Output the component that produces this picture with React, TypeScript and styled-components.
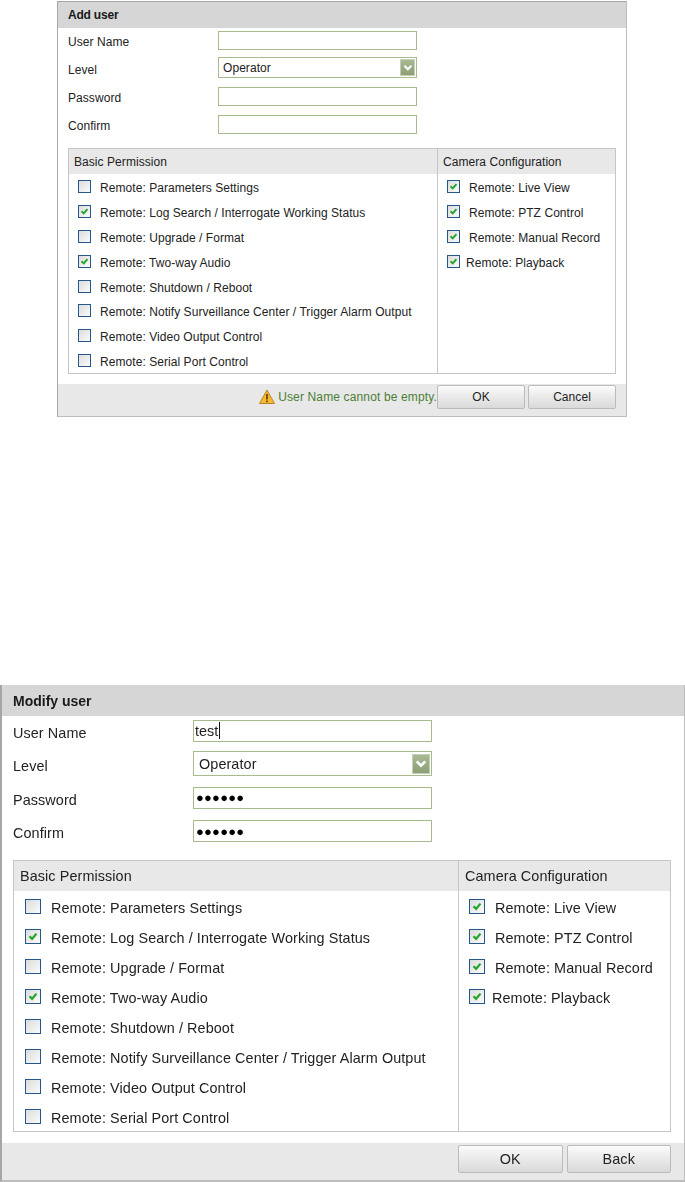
import React from "react";
import styled, { createGlobalStyle, ThemeProvider } from "styled-components";

const GlobalStyle = createGlobalStyle`
  html, body { margin: 0; padding: 0; background: #fff; }
  body { font-family: "Liberation Sans", Arial, sans-serif; }
`;

type M = {
  width: number; marginTop: number; marginLeft: number; borderL: number; borderT: number; borderR: number; borderB: number;
  headerH: number; titleSize: number; titleSpacing: number; pad: number; fieldH: number; labelW: number; inputW: number; inputH: number; selectH: number;
  inputGap: number; selectGap: number; font: number; spacing: number; tableTop: number; tableW: number; headH: number; rowH: number;
  leftW: number; cb: number; cbH: number; cbLeft: number; cbGap: number; cellPad: number; footerTop: number; footerH: number;
  btnW: number; btnH: number; btnGap: number; arrowW: number; arrowH: number; blur: number; rightCbLeft: number; rightGap: number; tightGap: number;
  valuePad: number; footerPad: number; footerAlign: number; caretH: number;
};

const small: M = {
  width: 570, marginTop: 1, marginLeft: 57, borderL: 1, borderT: 1, borderR: 1, borderB: 1,
  headerH: 26, titleSize: 12, titleSpacing: -0.2, pad: 10, fieldH: 28, labelW: 150, inputW: 199, inputH: 19, selectH: 21,
  inputGap: 3, selectGap: 5, font: 12, spacing: 0.06, tableTop: 8, tableW: 548, headH: 25, rowH: 24.9,
  leftW: 368, cb: 13, cbH: 13, cbLeft: 9, cbGap: 9, cellPad: 5, footerTop: 10, footerH: 32,
  btnW: 88, btnH: 24, btnGap: 3, arrowW: 15, arrowH: 17, blur: 0, rightCbLeft: 9, rightGap: 9, tightGap: 6,
  valuePad: 5, footerPad: 10, footerAlign: 1, caretH: 14,
};

const large: M = {
  width: 685, marginTop: 268, marginLeft: 0, borderL: 2, borderT: 0, borderR: 1, borderB: 2,
  headerH: 31, titleSize: 14, titleSpacing: 0, pad: 11, fieldH: 33.5, labelW: 180, inputW: 239, inputH: 22, selectH: 25,
  inputGap: 4, selectGap: 5.5, font: 14.4, spacing: 0.09, tableTop: 10, tableW: 658, headH: 30, rowH: 30,
  leftW: 444, cb: 16, cbH: 15, cbLeft: 11, cbGap: 10, cellPad: 6, footerTop: 11, footerH: 37,
  btnW: 104.5, btnH: 28, btnGap: 4, arrowW: 18, arrowH: 20, blur: 0.4, rightCbLeft: 10, rightGap: 11, tightGap: 7,
  valuePad: 6, footerPad: 13, footerAlign: 2, caretH: 17,
};

const Panel = styled.section`
  box-sizing: border-box;
  width: ${p => p.theme.width}px;
  margin: ${p => p.theme.marginTop}px 0 0 ${p => p.theme.marginLeft}px;
  border-style: solid;
  border-color: #a6a6a6 #bdbdbd #bdbdbd #a6a6a6;
  border-width: ${p => p.theme.borderT}px ${p => p.theme.borderR}px ${p => p.theme.borderB}px ${p => p.theme.borderL}px;
  color: #222;
  font-size: ${p => p.theme.font}px;
  letter-spacing: ${p => p.theme.spacing}px;
  filter: ${p => (p.theme.blur ? `blur(${p.theme.blur}px)` : "none")};
`;

const Header = styled.h2`
  display: flex;
  align-items: center;
  height: ${p => p.theme.headerH}px;
  margin: 0;
  padding-left: ${p => p.theme.pad}px;
  background: #d6d6d6;
  color: #1a1a1a;
  font-size: ${p => p.theme.titleSize}px;
  font-weight: bold;
  letter-spacing: ${p => p.theme.titleSpacing}px;
`;

const Body = styled.div`
  padding: 0 ${p => p.theme.pad - 1}px 0 ${p => p.theme.pad}px;
`;

const Field = styled.div`
  display: grid;
  grid-template-columns: ${p => p.theme.labelW}px ${p => p.theme.inputW}px;
  align-items: center;
  height: ${p => p.theme.fieldH}px;
`;

const Label = styled.label``;

const InputBox = styled.div`
  box-sizing: border-box;
  display: flex;
  align-items: center;
  height: ${p => p.theme.inputH}px;
  margin-bottom: ${p => p.theme.inputGap}px;
  padding-left: 1px;
  border: 1px solid #a8bb8d;
  background: #fff;
  letter-spacing: 0;
`;

const Caret = styled.span`
  width: 1px;
  height: ${p => p.theme.caretH}px;
  margin-left: 0.5px;
  background: #111;
`;

const Dots = styled.span`
  padding-left: 1px;
  color: #000;
  font-size: 13px;
  letter-spacing: 0.2px;
`;

const SelectBox = styled.div`
  box-sizing: border-box;
  display: flex;
  align-items: center;
  justify-content: space-between;
  height: ${p => p.theme.selectH}px;
  margin-bottom: ${p => p.theme.selectGap}px;
  padding: 0 1px 0 ${p => p.theme.valuePad - 1}px;
  border: 1px solid #a8bb8d;
  background: #fff;
`;

const Arrow = styled.span`
  box-sizing: border-box;
  display: flex;
  align-items: center;
  justify-content: center;
  width: ${p => p.theme.arrowW}px;
  height: ${p => p.theme.arrowH}px;
  border: 1px solid #c4d0b4;
  background: linear-gradient(#a9b994, #8c9f76);
`;

const Table = styled.div`
  box-sizing: border-box;
  display: grid;
  grid-template-columns: ${p => p.theme.leftW}px 1fr;
  width: ${p => p.theme.tableW}px;
  margin-top: ${p => p.theme.tableTop}px;
  border: 1px solid #c6c6c6;
`;

const Column = styled.div<{ $divider?: boolean }>`
  border-left: ${p => (p.$divider ? "1px solid #c6c6c6" : "none")};
`;

const ColumnHead = styled.div`
  display: flex;
  align-items: center;
  height: ${p => p.theme.headH}px;
  padding-left: ${p => p.theme.cellPad}px;
  background: #e8e8e8;
`;

const Row = styled.div<{ $right?: boolean }>`
  display: flex;
  align-items: center;
  height: ${p => p.theme.rowH}px;
  padding-left: ${p => (p.$right ? p.theme.rightCbLeft : p.theme.cbLeft)}px;
`;

const Box = styled.span`
  box-sizing: border-box;
  flex: none;
  display: flex;
  align-items: center;
  justify-content: center;
  width: ${p => p.theme.cb}px;
  height: ${p => p.theme.cbH}px;
  border: 1px solid #24588c;
  background: linear-gradient(135deg, #dcdcdc, #fbfbfb);
`;

const RowText = styled.span<{ $tight?: boolean }>`
  padding-top: 3px;
  margin-left: ${p => (p.$tight ? p.theme.tightGap : p.theme.cbGap)}px;
  white-space: nowrap;
`;

const Footer = styled.div`
  box-sizing: border-box;
  display: flex;
  align-items: flex-start;
  justify-content: flex-end;
  gap: ${p => p.theme.btnGap}px;
  height: ${p => p.theme.footerH}px;
  margin-top: ${p => p.theme.footerTop}px;
  padding: ${p => p.theme.footerAlign}px ${p => p.theme.footerPad}px 0 0;
  background: #e8e8e8;
`;

const Message = styled.div`
  display: flex;
  align-items: center;
  gap: 3px;
  height: 24px;
  margin-right: -3px;
  color: #4b7f35;
  letter-spacing: 0.14px;
  white-space: nowrap;
`;

const Button = styled.button`
  box-sizing: border-box;
  width: ${p => p.theme.btnW}px;
  height: ${p => p.theme.btnH}px;
  padding: 0;
  border: 1px solid #bbb;
  border-radius: 2px;
  background: linear-gradient(#fbfbfb, #d9d9d9);
  color: #222;
  font: inherit;
  letter-spacing: inherit;
`;

const Check = ({ on }: { on: boolean }) => (
  <Box>
    {on && (
      <svg viewBox="0 0 13 13" width="100%" height="100%">
        <path d="M3 6.2 L5.6 8.8 L10 3.6" fill="none" stroke="#22a52a" strokeWidth="2.2" />
      </svg>
    )}
  </Box>
);

const Warning = () => (
  <svg width="16" height="16" viewBox="0 0 16 16">
    <path d="M8 1 L15.5 14.5 H0.5 Z" fill="#f5b82e" stroke="#b9822a" strokeLinejoin="round" />
    <rect x="7.2" y="5" width="1.6" height="5.5" fill="#5a3a10" />
    <rect x="7.2" y="11.5" width="1.6" height="1.6" fill="#5a3a10" />
  </svg>
);

const Chevron = () => (
  <svg width="75%" height="75%" viewBox="0 0 10 10">
    <path d="M1.5 3 L5 6.6 L8.5 3" fill="none" stroke="#fff" strokeWidth="2.2" />
  </svg>
);

const basic: [string, boolean][] = [
  ["Remote: Parameters Settings", false],
  ["Remote: Log Search / Interrogate Working Status", true],
  ["Remote: Upgrade / Format", false],
  ["Remote: Two-way Audio", true],
  ["Remote: Shutdown / Reboot", false],
  ["Remote: Notify Surveillance Center / Trigger Alarm Output", false],
  ["Remote: Video Output Control", false],
  ["Remote: Serial Port Control", false],
];

const camera: [string, boolean][] = [
  ["Remote: Live View", false],
  ["Remote: PTZ Control", false],
  ["Remote: Manual Record", false],
  ["Remote: Playback", true],
];

type FormProps = {
  metrics: M;
  title: string;
  userName?: string;
  filled?: boolean;
  message?: string;
  cancel: string;
};

const UserForm = ({ metrics, title, userName, filled, message, cancel }: FormProps) => (
  <ThemeProvider theme={metrics}>
    <Panel>
      <Header>{title}</Header>
      <Body>
        <Field>
          <Label>User Name</Label>
          <InputBox>
            {userName}
            {userName && <Caret />}
          </InputBox>
        </Field>
        <Field>
          <Label>Level</Label>
          <SelectBox>
            Operator
            <Arrow><Chevron /></Arrow>
          </SelectBox>
        </Field>
        <Field>
          <Label>Password</Label>
          <InputBox>{filled && <Dots>●●●●●●</Dots>}</InputBox>
        </Field>
        <Field>
          <Label>Confirm</Label>
          <InputBox>{filled && <Dots>●●●●●●</Dots>}</InputBox>
        </Field>
        <Table>
          <Column>
            <ColumnHead>Basic Permission</ColumnHead>
            {basic.map(([text, on]) => (
              <Row key={text}>
                <Check on={on} />
                <RowText>{text}</RowText>
              </Row>
            ))}
          </Column>
          <Column $divider>
            <ColumnHead>Camera Configuration</ColumnHead>
            {camera.map(([text, tight]) => (
              <Row key={text} $right>
                <Check on />
                <RowText $tight={tight}>{text}</RowText>
              </Row>
            ))}
          </Column>
        </Table>
      </Body>
      <Footer>
        {message && (
          <Message>
            <Warning />
            {message}
          </Message>
        )}
        <Button>OK</Button>
        <Button>{cancel}</Button>
      </Footer>
    </Panel>
  </ThemeProvider>
);

export default function App() {
  return (
    <>
      <GlobalStyle />
      <UserForm metrics={small} title="Add user" message="User Name cannot be empty." cancel="Cancel" />
      <UserForm metrics={large} title="Modify user" userName="test" filled cancel="Back" />
    </>
  );
}
